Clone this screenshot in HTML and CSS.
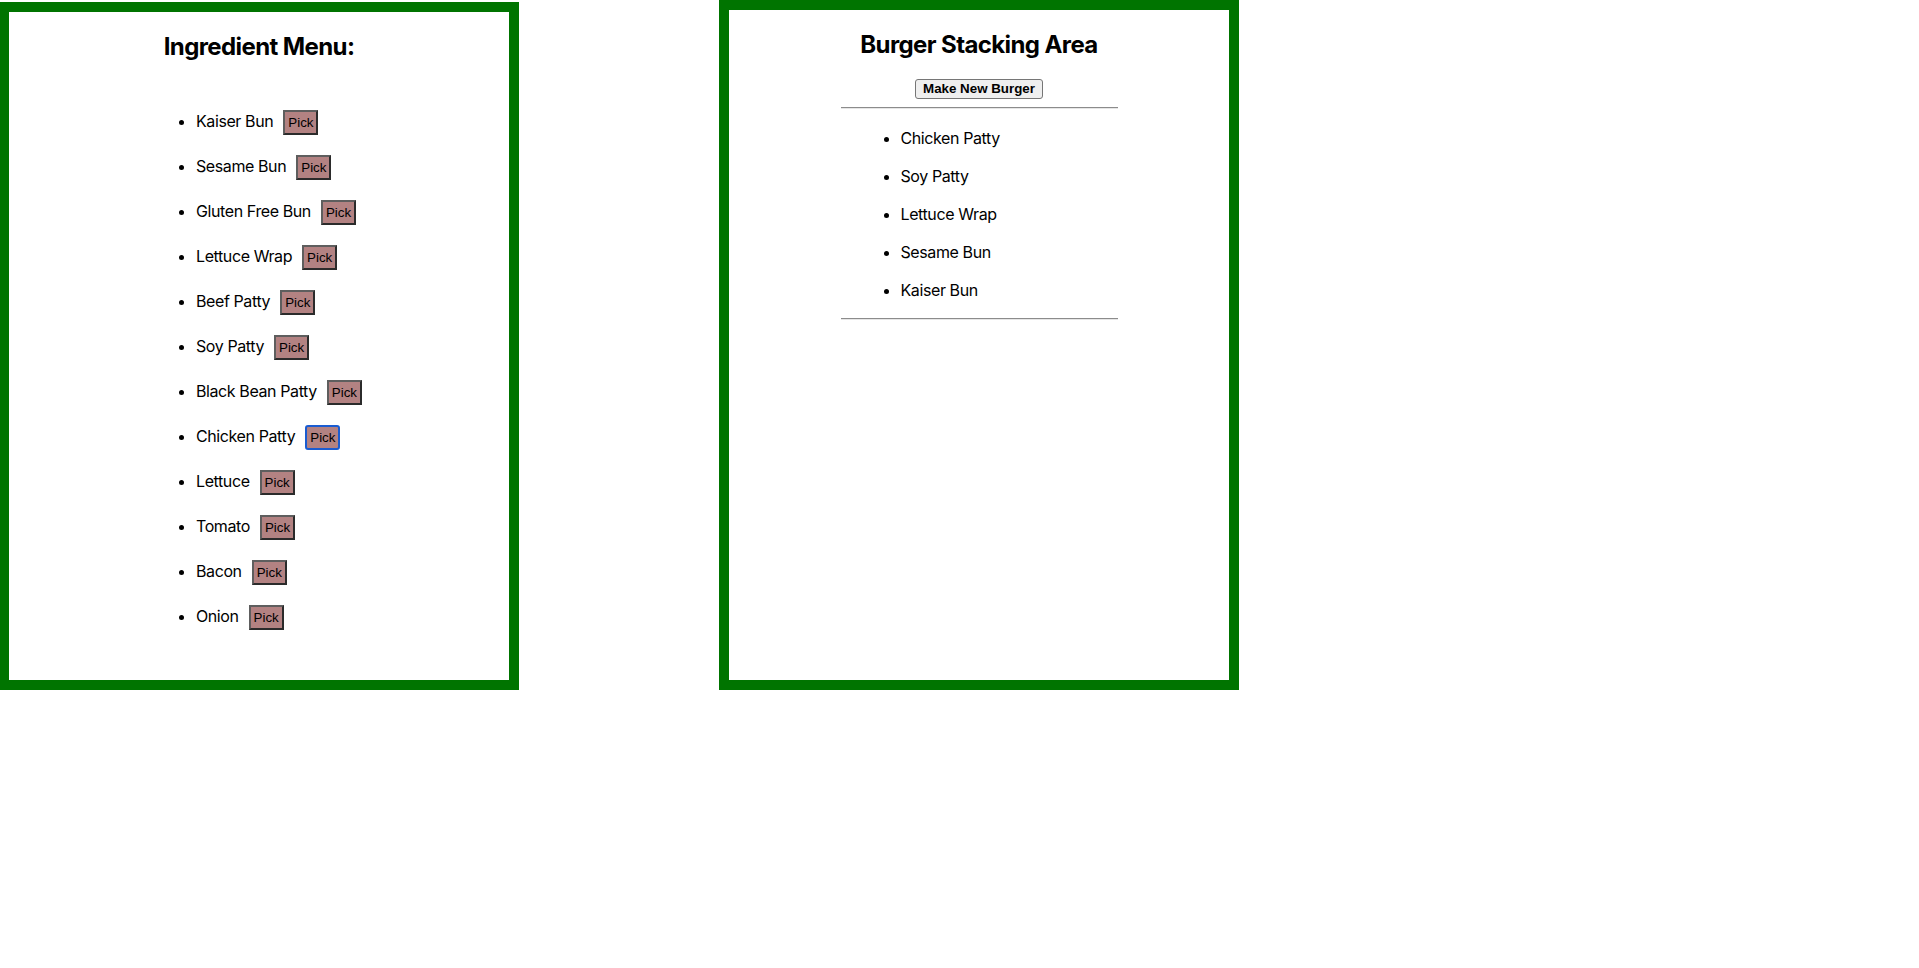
FILE: index.html
```html
<!DOCTYPE html>
<html lang="en">
<head>
<meta charset="utf-8">
<title>Burger Builder</title>
<link rel="stylesheet" href="styles.css">
</head>
<body>
<main class="board">
  <section class="panel panel-menu">
    <h2 class="panel-title">Ingredient Menu:</h2>
    <ul class="ingredient-list">
      <li>Kaiser Bun<button class="pick">Pick</button></li>
      <li>Sesame Bun<button class="pick">Pick</button></li>
      <li>Gluten Free Bun<button class="pick">Pick</button></li>
      <li>Lettuce Wrap<button class="pick">Pick</button></li>
      <li>Beef Patty<button class="pick">Pick</button></li>
      <li>Soy Patty<button class="pick">Pick</button></li>
      <li>Black Bean Patty<button class="pick">Pick</button></li>
      <li>Chicken Patty<button class="pick is-focused">Pick</button></li>
      <li>Lettuce<button class="pick">Pick</button></li>
      <li>Tomato<button class="pick">Pick</button></li>
      <li>Bacon<button class="pick">Pick</button></li>
      <li>Onion<button class="pick">Pick</button></li>
    </ul>
  </section>
  <section class="panel panel-stack">
    <h2 class="panel-title">Burger Stacking Area</h2>
    <div class="actions"><button class="new-burger">Make New Burger</button></div>
    <div class="stack">
      <hr class="rule">
      <ul class="stack-list">
        <li>Chicken Patty</li>
        <li>Soy Patty</li>
        <li>Lettuce Wrap</li>
        <li>Sesame Bun</li>
        <li>Kaiser Bun</li>
      </ul>
      <hr class="rule rule-bottom">
    </div>
  </section>
</main>
</body>
</html>
```

FILE: styles.css
```css
* { box-sizing: border-box; }

html, body {
  margin: 0;
  padding: 0;
  background: #ffffff;
}

body {
  font-family: Inter, "Noto Sans", "Liberation Sans", sans-serif;
  font-size: 16px;
  letter-spacing: -0.4px;
  color: #000;
}

.board {
  display: flex;
  align-items: flex-end;
  gap: 200px;
  margin-left: -1px;
}

.panel {
  width: 520px;
  border: 10px solid #007400;
  background: #fff;
}

.panel-menu { height: 688px; }
.panel-stack { height: 690px; }

.panel-title {
  margin: 20px 0 0;
  font-size: 24px;
  font-weight: 700;
  letter-spacing: -0.6px;
  text-align: center;
  line-height: normal;
}

.ingredient-list {
  display: grid;
  row-gap: 20px;
  width: max-content;
  margin: 48px auto 0;
  padding-left: 40px;
}

.ingredient-list li {
  height: 25px;
  line-height: 25px;
}

.pick {
  margin-left: 10px;
  padding: 3px 3px;
  font-family: "Liberation Sans", Arial, sans-serif;
  font-size: 13.33px;
  letter-spacing: 0;
  line-height: 15px;
  color: #000;
  background: #b38282;
  border: 2px solid;
  border-color: #5e5e5e #2b2b2b #2b2b2b #5e5e5e;
  vertical-align: baseline;
}

.pick.is-focused {
  border-color: #1a5cd1;
  border-radius: 3px;
}

.actions {
  display: flex;
  justify-content: center;
  margin-top: 20px;
}

.new-burger {
  padding: 1px 7px;
  font-family: "Liberation Sans", Arial, sans-serif;
  font-size: 13.33px;
  font-weight: 700;
  letter-spacing: 0;
  line-height: 16px;
  color: #000;
  background: #efefef;
  border: 1px solid #767676;
  border-radius: 3px;
}

.stack {
  width: 277px;
  margin: 0 auto;
}

.rule {
  margin: 8px 0 0;
  height: 0;
  border: 0;
  border-top: 1px solid #8c8c8c;
  border-bottom: 1px solid #e6e6e6;
}

.rule-bottom { margin-top: 1px; }

.stack-list {
  display: grid;
  row-gap: 18px;
  margin: 19px 0 18px;
  padding-left: 60px;
}

.stack-list li {
  line-height: 20px;
}
```
